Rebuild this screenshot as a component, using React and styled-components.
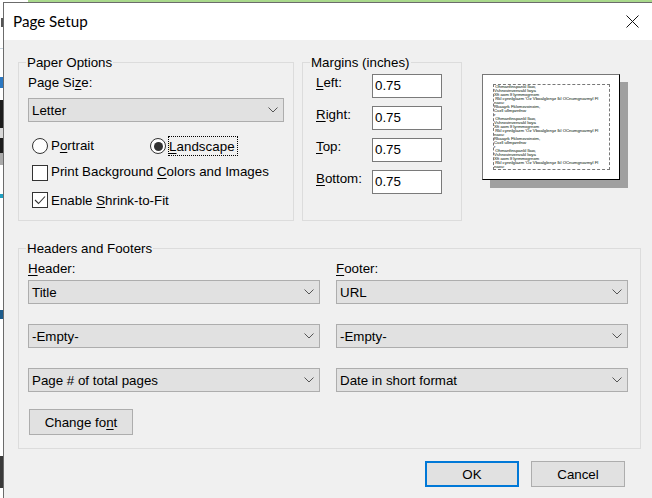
import React from "react";
import styled, { createGlobalStyle } from "styled-components";

const Global = createGlobalStyle`
  html, body { margin: 0; padding: 0; background: #fff; }
  body { width: 652px; height: 498px; overflow: hidden; font-family: "Liberation Sans", Arial, sans-serif; font-size: 13.33px; color: #000; }
  * { box-sizing: border-box; }
`;

const Desktop = styled.div`
  position: relative;
  width: 652px;
  height: 498px;
  overflow: hidden;
  display: flex;
  flex-direction: column;
  align-items: flex-end;
`;

const BackdropStrip = styled.div`
  width: 624px;
  height: 2px;
  background: #a9d98c;
  flex: none;
`;

const Peek = styled.div`
  position: absolute;
  left: ${p => p.$x ?? 0}px;
  top: ${p => p.$y}px;
  width: ${p => p.$w ?? 3}px;
  height: ${p => p.$h}px;
  background: ${p => p.$c};
`;

const Window = styled.section`
  width: 649px;
  height: 496px;
  flex: none;
  border-top: 1px solid #6b6b6b;
  border-left: 1px solid #6b6b6b;
  background: #f0f0f0;
  display: flex;
  flex-direction: column;
  position: relative;
`;

const TitleBar = styled.header`
  height: 37px;
  flex: none;
  background: #fff;
  display: flex;
  align-items: center;
  justify-content: space-between;
  padding: 0 13px 0 9px;
`;

const Title = styled.h1`
  margin: 0 0 2px;
  font: 400 15.2px/20px Lato, "Noto Sans", sans-serif;
`;

const Body = styled.div`
  flex: 1;
  padding: 14px 11px 0 14px;
  display: flex;
  flex-direction: column;
`;

const TopRow = styled.div`
  display: flex;
  align-items: flex-start;
`;

const Group = styled.fieldset`
  margin: ${p => p.$mt ?? 0}px ${p => p.$mr ?? 0}px 0 0;
  padding: ${p => p.$pad};
  border: 1px solid #dcdcdc;
  width: ${p => p.$w}px;
  height: ${p => p.$h}px;
  min-width: 0;
  display: flex;
  flex-direction: column;
  & > legend {
    padding: 0 1px;
    margin-left: ${p => p.$legendX}px;
    font-size: 13.33px;
    line-height: 18px;
    height: 16px;
  }
`;

const Text = styled.div`
  line-height: 18px;
  height: 16px;
  white-space: nowrap;
`;

const SizeLabel = styled(Text)`
  margin-bottom: 8px;
`;

const U = styled.span`
  text-decoration: underline;
  text-underline-offset: 2px;
  text-decoration-thickness: 1px;
`;

const Select = styled.div`
  width: ${p => p.$w}px;
  height: 24px;
  flex: none;
  background: #e1e1e1;
  border: 1px solid #adadad;
  display: flex;
  align-items: center;
  justify-content: space-between;
  padding: 0 4px 0 3px;
`;

const SelectValue = styled.span`
  line-height: 18px;
  padding-top: 2px;
`;

const ChevronSvg = styled.svg`
  width: 10px;
  height: 6px;
  margin-right: 1px;
  flex: none;
`;

const Chevron = () => (
  <ChevronSvg viewBox="0 0 10 6" fill="none" stroke="#555" strokeWidth="1">
    <path d="M0.5 0.5 L5 5 L9.5 0.5" />
  </ChevronSvg>
);

const Drop = ({ w, children }) => (
  <Select $w={w}>
    <SelectValue>{children}</SelectValue>
    <Chevron />
  </Select>
);

const OrientationRow = styled.div`
  display: flex;
  height: 18px;
  margin: 15px 0 10px 4px;
  align-items: center;
`;

const Choice = styled.label`
  display: flex;
  align-items: center;
  width: ${p => (p.$w ? `${p.$w}px` : "auto")};
  gap: 3px;
  line-height: 18px;
  flex: none;
`;

const RadioCircle = styled.span`
  width: 16px;
  height: 16px;
  border-radius: 50%;
  border: 1px solid #333;
  background: #fff;
  flex: none;
  display: flex;
  align-items: center;
  justify-content: center;
  &::after {
    content: "";
    width: 9px;
    height: 9px;
    border-radius: 50%;
    background: ${p => (p.$on ? "#333" : "transparent")};
  }
`;

const Focused = styled.span`
  outline: 1px dotted #000;
  line-height: 19px;
  padding: 0 2px 0 0;
  height: 18px;
  letter-spacing: 0.05px;
  display: inline-flex;
  align-items: flex-start;
`;

const CheckRow = styled.label`
  display: flex;
  align-items: center;
  gap: 3px;
  height: 16px;
  margin: 0 0 ${p => p.$mb ?? 0}px 4px;
  white-space: nowrap;
`;

const CheckText = styled.span`
  line-height: 14px;
  height: 16px;
`;

const Box = styled.span`
  width: 16px;
  height: 16px;
  border: 1px solid #333;
  background: #fff;
  flex: none;
  display: flex;
  align-items: center;
  justify-content: center;
`;

const CheckSvg = styled.svg`
  width: 12px;
  height: 10px;
`;

const MarginRows = styled.div`
  display: flex;
  flex-direction: column;
  gap: 8px;
`;

const MarginRow = styled.div`
  display: flex;
  align-items: flex-start;
`;

const MarginLabel = styled(Text)`
  width: 56px;
`;

const NumberField = styled.div`
  width: 70px;
  height: 24px;
  background: #fff;
  border: 1px solid #7a7a7a;
  padding: 0 2px;
  line-height: 21px;
`;

const PaperPreview = styled.div`
  width: 138px;
  height: 106px;
  margin-top: 20px;
  flex: none;
  background: #fff;
  border: 1px solid #000;
  border-top-color: #777;
  border-left-color: #777;
  box-shadow: 8px 8px 0 #a0a0a0;
  padding: 9px 10px;
`;

const PrintArea = styled.div`
  width: 117px;
  height: 86px;
  border: 1px dashed #777;
  overflow: hidden;
  font-size: 4.3px;
  line-height: 4px;
  color: #56706a;
  text-shadow: 0 0 0.6px #7a6a60;
  white-space: pre;
`;

const SampleLine = styled.div`
  height: 4px;
  line-height: 4px;
`;

const Columns = styled.div`
  display: grid;
  grid-template-columns: 292px 292px;
  column-gap: 16px;
  margin-top: 2px;
`;

const Column = styled.div`
  display: flex;
  flex-direction: column;
`;

const ColumnLabel = styled(Text)`
  margin-bottom: 4px;
`;

const SelectStack = styled.div`
  display: flex;
  flex-direction: column;
  gap: 20px;
`;

const ActionButton = styled.button`
  width: ${p => p.$w}px;
  height: ${p => p.$h}px;
  background: #e1e1e1;
  border: ${p => (p.$primary ? "2px solid #0078d7" : "1px solid #adadad")};
  font: 400 13.33px/16px "Liberation Sans", Arial, sans-serif;
  color: #000;
  padding: 1px 0 0;
`;

const FontButton = styled(ActionButton)`
  margin: 17px 0 0 1px;
  flex: none;
`;

const Footer = styled.footer`
  display: flex;
  justify-content: flex-end;
  gap: 12px;
  margin-top: 12px;
  padding-right: 16px;
`;

const CloseSvg = styled.svg`
  width: 13px;
  height: 13px;
  flex: none;
`;

const sample = [
  " Ohmanfinspankl llaw,",
  "Vshnxvinvenvakl lwya",
  "Xft aom lf lyrmmxgrnxm",
  " Rkl cynnlglazm 'Oz Vboalglenyz lkl OCnumgnavmyl Fl",
  "naxu:",
  "Rkaayrk Fklxmxvxinxim,",
  "Cvzll ullmpznfnw",
  "r",
];
const lines = [...sample, ...sample, ...sample.slice(0, 5)];

export default function App() {
  return (
    <Desktop>
      <Global />
      <Peek $y={18} $x={1} $w={2} $h={9} $c="#555" />
      <Peek $y={48} $h={1} $c="#c8d4dc" />
      <Peek $y={77} $h={11} $c="#2b78c2" />
      <Peek $y={100} $h={53} $c="#1c1c1c" />
      <Peek $y={128} $h={10} $c="#d8d8d8" />
      <Peek $y={153} $h={12} $c="#aaa" />
      <Peek $y={194} $h={4} $c="#1f9fc0" />
      <Peek $y={310} $h={9} $c="#1d5c8c" />
      <Peek $y={456} $h={32} $c="#3a3a3a" />
      <BackdropStrip />
      <Window>
        <TitleBar>
          <Title>Page Setup</Title>
          <CloseSvg viewBox="0 0 13 13" fill="none" stroke="#111" strokeWidth="1">
            <path d="M0.5 0.5 L12.5 12.5 M12.5 0.5 L0.5 12.5" />
          </CloseSvg>
        </TitleBar>
        <Body>
          <TopRow>
            <Group $w={276} $h={167} $mr={8} $pad="4px 9px 0 9px" $legendX={-2}>
              <legend>Paper Options</legend>
              <SizeLabel>Page Si<U>z</U>e:</SizeLabel>
              <Drop w={256}>Letter</Drop>
              <OrientationRow>
                <Choice $w={118}>
                  <RadioCircle />
                  <span>P<U>o</U>rtrait</span>
                </Choice>
                <Choice>
                  <RadioCircle $on />
                  <Focused><U>L</U>andscape</Focused>
                </Choice>
              </OrientationRow>
              <CheckRow $mb={11}>
                <Box />
                <CheckText>Print Background <U>C</U>olors and Images</CheckText>
              </CheckRow>
              <CheckRow>
                <Box>
                  <CheckSvg viewBox="0 0 12 10" fill="none" stroke="#333" strokeWidth="1.1">
                    <path d="M1 5 L4.5 8.5 L11 1.5" />
                  </CheckSvg>
                </Box>
                <span>Enable <U>S</U>hrink-to-Fit</span>
              </CheckRow>
            </Group>
            <Group $w={160} $h={167} $mr={20} $pad="4px 0 0 13px" $legendX={-6}>
              <legend>Margins (inches)</legend>
              <MarginRows>
                <MarginRow><MarginLabel><U>L</U>eft:</MarginLabel><NumberField>0.75</NumberField></MarginRow>
                <MarginRow><MarginLabel><U>R</U>ight:</MarginLabel><NumberField>0.75</NumberField></MarginRow>
                <MarginRow><MarginLabel><U>T</U>op:</MarginLabel><NumberField>0.75</NumberField></MarginRow>
                <MarginRow><MarginLabel><U>B</U>ottom:</MarginLabel><NumberField>0.75</NumberField></MarginRow>
              </MarginRows>
            </Group>
            <PaperPreview>
              <PrintArea>
                {lines.map((l, i) => <SampleLine key={i}>{l}</SampleLine>)}
              </PrintArea>
            </PaperPreview>
          </TopRow>
          <Group $w={623} $h={209} $mt={19} $pad="2px 9px 0 9px" $legendX={-2}>
            <legend>Headers and Footers</legend>
            <Columns>
              <Column>
                <ColumnLabel><U>H</U>eader:</ColumnLabel>
                <SelectStack>
                  <Drop w={292}>Title</Drop>
                  <Drop w={292}>-Empty-</Drop>
                  <Drop w={292}>Page # of total pages</Drop>
                </SelectStack>
              </Column>
              <Column>
                <ColumnLabel><U>F</U>ooter:</ColumnLabel>
                <SelectStack>
                  <Drop w={292}>URL</Drop>
                  <Drop w={292}>-Empty-</Drop>
                  <Drop w={292}>Date in short format</Drop>
                </SelectStack>
              </Column>
            </Columns>
            <FontButton $w={104} $h={26}>Change fo<U>n</U>t</FontButton>
          </Group>
          <Footer>
            <ActionButton $primary $w={94} $h={26}>OK</ActionButton>
            <ActionButton $w={94} $h={26}>Cancel</ActionButton>
          </Footer>
        </Body>
      </Window>
    </Desktop>
  );
}
